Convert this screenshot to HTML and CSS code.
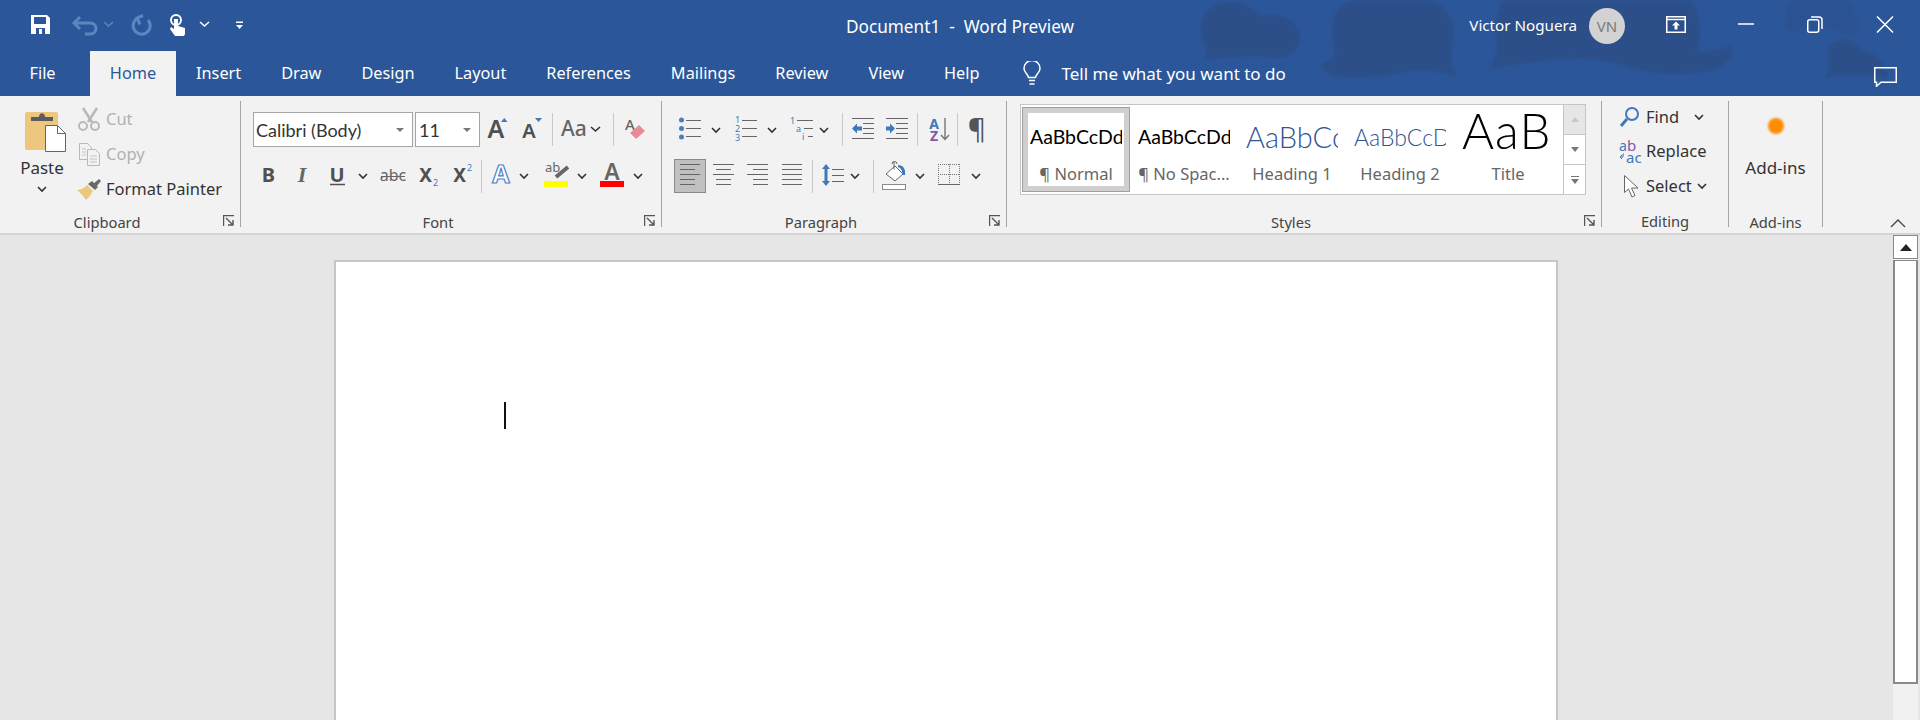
FILE: index.html
```html
<!DOCTYPE html>
<html lang="en">
<head>
    <meta charset="UTF-8">
    <title>Document1 - Word Preview</title>
    <link rel="stylesheet" href="styles.css">
</head>
<body>
    <svg class="defs" width="0" height="0">
        <symbol id="chev" viewBox="0 0 16 12"><path d="M4 4l4 4 4-4" fill="none" stroke="#333" stroke-width="1.6"/></symbol>
        <symbol id="launcher" viewBox="0 0 12 12"><path d="M.5 11V.5H11M3 3l7 7M10 5v5H5" fill="none" stroke="#555" stroke-width="1.4"/></symbol>
    </svg>

    <div class="top-band">
        <svg class="clouds" width="1920" height="96" viewBox="0 0 1920 96">
            <path d="M1201 60c8-5 7-10 3-18-10-20 2-40 28-40 14 0 24 12 32 14 14-4 36 4 36 20 0 20-22 26-38 20-18 0-42 2-61 4z"/>
            <path d="M1322 62c8 0 14-2 12-12-4-20-4-50 24-50h68c22 4 32 24 26 48-2 12 0 22 6 30-16-6-34-10-52-6-26 6-58 8-72 4-8-2-14-8-12-14z"/>
            <path d="M1487 70c8-10 12-20 10-30-4-16 2-40 10-40h184c8 10 12 30 6 50 8 4 26-2 35-4 2 14-10 24-28 26-30 4-50 2-72-4-26-8-52-12-78-8-26 4-48 4-67 10z"/>
            <path d="M1824 78c4-6 6-14 4-22-2-10 6-16 16-16 12 0 16 10 24 12 10 4 18 14 20 26-18-4-46-4-64 0z"/>
            <path class="cloud-light" d="M1786 30c-4-14 2-30 10-30h50c10 10 16 22 12 36-10 4-20-6-32-8-12 0-28 6-40 2z"/>
        </svg>

        <header class="titlebar">
            <div class="qat">
                <svg width="36" height="51" viewBox="0 0 36 51">
                    <path d="M7 15h16l3 3v16H7z" fill="#fff"/>
                    <path d="M10 17h12v7H10z" fill="#2b579a"/>
                    <path d="M12 28h9v6h-9z" fill="#2b579a"/>
                    <path d="M15 29h3v5h-3z" fill="#fff"/>
                </svg>
                <svg width="40" height="51" viewBox="0 0 40 51">
                    <path d="M20 17l-6 6 6 6M15 23h15c8 0 8 11 0 11h-5" fill="none" stroke="#5a87bf" stroke-width="3"/>
                </svg>
                <svg width="18" height="51" viewBox="0 0 18 51"><path d="M4 22l4.500 4 4.500-4" fill="none" stroke="#5a87bf" stroke-width="1.500"/></svg>
                <svg width="42" height="51" viewBox="0 0 42 51">
                    <path d="M30 20a8.500 8.500 0 1 1-10-2" fill="none" stroke="#5a87bf" stroke-width="3"/>
                    <path d="M25 15.500l-6 2.500 3 6.500" fill="none" stroke="#5a87bf" stroke-width="3"/>
                </svg>
                <svg width="32" height="51" viewBox="0 0 32 51">
                    <circle cx="16" cy="20" r="5" fill="none" stroke="#fff" stroke-width="2"/>
                    <path d="M14 19h4v7l7 2v6l-1 2H15l-5-7 1-2 3 2z" fill="#fff"/>
                </svg>
                <svg width="26" height="51" viewBox="0 0 26 51"><path d="M8 22l4.500 4 4.500-4" fill="none" stroke="#fff" stroke-width="1.500"/></svg>
                <svg width="38" height="51" viewBox="0 0 38 51"><path d="M18 21.500h7v1.500h-7zM18 25h7l-3.500 4z" fill="#fff"/></svg>
            </div>
            <div class="doc-title">Document1 &nbsp;-&nbsp; Word Preview</div>
            <div class="account">
                <span class="user-name">Victor Noguera</span>
                <span class="avatar">VN</span>
                <button class="win-btn">
                    <svg width="20" height="17" viewBox="0 0 20 17"><path d="M.75.75h18.500v15.500H.75zM1 3.500h18" fill="none" stroke="#fff" stroke-width="1.500"/><path d="M10 5.500l-4 4h2.500v4h3v-4H14z" fill="#fff"/></svg>
                </button>
                <button class="win-btn">
                    <svg width="16" height="2" viewBox="0 0 16 2"><path d="M0 1h16" stroke="#fff" stroke-width="1.500"/></svg>
                </button>
                <button class="win-btn">
                    <svg width="16" height="17" viewBox="0 0 16 17"><rect x=".75" y="3.750" width="11" height="12.500" rx="2" fill="none" stroke="#fff" stroke-width="1.500"/><path d="M4 1h8a3 3 0 0 1 3 3v9" fill="none" stroke="#fff" stroke-width="1.500"/></svg>
                </button>
                <button class="win-btn">
                    <svg width="18" height="17" viewBox="0 0 18 17"><path d="M1 .5l16 16M17 .5l-16 16" stroke="#fff" stroke-width="1.500"/></svg>
                </button>
            </div>
        </header>

        <nav class="tabs">
            <a class="tab tab-file">File</a>
            <a class="tab active">Home</a>
            <a class="tab">Insert</a>
            <a class="tab">Draw</a>
            <a class="tab">Design</a>
            <a class="tab">Layout</a>
            <a class="tab">References</a>
            <a class="tab">Mailings</a>
            <a class="tab">Review</a>
            <a class="tab">View</a>
            <a class="tab">Help</a>
            <div class="tell-me">
                <svg width="18" height="25" viewBox="0 0 18 25"><path d="M5.500 16.500c0-3-4.500-5-4.500-9a8 8 0 0 1 16 0c0 4-4.500 6-4.500 9zM6 19.500h6M6.500 23h5" fill="none" stroke="#fff" stroke-width="1.500"/></svg>
                <span>Tell me what you want to do</span>
            </div>
            <svg class="comment-icon" width="23" height="20" viewBox="0 0 23 20"><path d="M.75.75h21.500v14.500H7l-4.500 4v-4H.75z" fill="none" stroke="#fff" stroke-width="1.500"/></svg>
        </nav>
    </div>

    <section class="ribbon">
        <div class="group group-clipboard">
            <div class="group-body clip-body">
                <div class="paste">
                    <svg width="68" height="50" viewBox="0 0 68 50">
                        <rect x="17" y="7" width="33" height="38" rx="2" fill="#edc77d"/>
                        <path d="M23 12h8c0-5 6-5 6 0h8v4H23z" fill="#5c5c5c"/>
                        <path d="M37.500 20.500h12l8 8v18h-20z" fill="#fff" stroke="#666"/>
                        <path d="M49.500 20.500v8h8" fill="none" stroke="#666"/>
                    </svg>
                    <span class="paste-label">Paste</span>
                    <svg class="chev" width="16" height="12"><use href="#chev"/></svg>
                </div>
                <div class="clip-list">
                    <div class="clip-row disabled">
                        <svg width="28" height="24" viewBox="0 0 28 24">
                            <path d="M7 1l9 14M21 1l-9 14" stroke="#b8b8b8" stroke-width="2.500"/>
                            <circle cx="7" cy="19" r="4" fill="none" stroke="#b8b8b8" stroke-width="2"/>
                            <circle cx="19" cy="19" r="4" fill="none" stroke="#b8b8b8" stroke-width="2"/>
                        </svg>
                        <span>Cut</span>
                    </div>
                    <div class="clip-row disabled">
                        <svg width="28" height="24" viewBox="0 0 28 24">
                            <path d="M3.500 1.500h8l4 4v12h-12z" fill="none" stroke="#b8b8b8"/>
                            <path d="M11.500 7.500h8l4 4v12h-12z" fill="#f2f2f2" stroke="#b8b8b8"/>
                            <path d="M6 7h4M6 10h4M6 13h4M14 14h7M14 17h7M14 20h7" stroke="#c4c4c4"/>
                        </svg>
                        <span>Copy</span>
                    </div>
                    <div class="clip-row">
                        <svg width="28" height="24" viewBox="0 0 28 24">
                            <path d="M1 13c5 0 8-3 10-5l6 6c-2 3-4 7-7 9-2-3-5-7-9-10z" fill="#edc77d"/>
                            <path d="M12 7l4-3 6 6-3 3z" fill="#6a6a6a"/>
                            <path d="M17 7l6-5 2 2-5 6z" fill="#6a6a6a"/>
                        </svg>
                        <span>Format Painter</span>
                    </div>
                </div>
            </div>
            <div class="group-label">Clipboard</div>
            <svg class="launcher" width="12" height="12"><use href="#launcher"/></svg>
        </div>

        <div class="group group-font">
            <div class="group-body">
                <div class="tool-row font-row">
                    <div class="combo combo-font"><span>Calibri (Body)</span><i class="combo-arrow"></i></div>
                    <div class="combo combo-size"><span>11</span><i class="combo-arrow"></i></div>
                    <svg width="34" height="35" viewBox="0 0 34 35"><text x="16" y="26" class="ico-text" font-size="25" font-weight="600" fill="#505050">A</text><path d="M21 10h6.500l-3.250-4z" fill="#3f79b9"/></svg>
                    <svg width="34" height="35" viewBox="0 0 34 35"><text x="15" y="26" class="ico-text" font-size="20" font-weight="600" fill="#505050">A</text><path d="M21 6h7l-3.500 4z" fill="#3f79b9"/></svg>
                    <i class="sep sep-a"></i>
                    <svg width="60" height="35" viewBox="0 0 60 35"><text x="8" y="24" font-family="Noto Sans" font-size="21" font-weight="500" fill="#666">Aa</text><path d="M38 15l4.500 4 4.500-4" fill="none" stroke="#333" stroke-width="1.600"/></svg>
                    <i class="sep"></i>
                    <svg width="36" height="35" viewBox="0 0 36 35"><text x="16" y="18" class="ico-text" font-size="15" font-weight="500" fill="#666">A</text><path d="M16 21l9-8 6 6-9 8z" fill="#e98a97"/><path d="M16 21l4 5 2 1-3 0z" fill="#fff"/></svg>
                </div>
                <div class="tool-row font-row second">
                    <svg width="32" height="34" viewBox="0 0 32 34"><text x="15.500" y="23" class="ico-text" font-size="20" font-weight="700" fill="#505050">B</text></svg>
                    <svg width="34" height="34" viewBox="0 0 34 34"><text x="17" y="23" class="ico-text ico-serif" font-size="22" font-weight="700" font-style="italic" fill="#666">I</text></svg>
                    <svg width="36" height="34" viewBox="0 0 36 34"><text x="18" y="23" class="ico-text" font-size="20" font-weight="700" fill="#505050">U</text><path d="M11 25.500h15" stroke="#505050" stroke-width="1.500"/></svg>
                    <svg class="chev" width="16" height="12"><use href="#chev"/></svg>
                    <svg width="41" height="34" viewBox="0 0 41 34"><text x="22" y="22" class="ico-text" font-size="16" fill="#666">abc</text><path d="M10 17.500h24" stroke="#666"/></svg>
                    <svg width="34" height="34" viewBox="0 0 34 34"><text x="13.500" y="23" class="ico-text" font-size="19" font-weight="700" fill="#505050">X</text><text x="23.500" y="27" class="ico-text" font-size="9" fill="#3f79b9">2</text></svg>
                    <svg width="34" height="34" viewBox="0 0 34 34"><text x="13.500" y="23" class="ico-text" font-size="19" font-weight="700" fill="#505050">X</text><text x="23.500" y="12" class="ico-text" font-size="9" fill="#3f79b9">2</text></svg>
                    <i class="sep sep-b"></i>
                    <svg width="34" height="34" viewBox="0 0 34 34"><text x="19" y="24" class="ico-text" font-size="25" font-weight="700" fill="#fff" stroke="#4a84c8" stroke-width="1.200">A</text></svg>
                    <svg class="chev" width="16" height="12"><use href="#chev"/></svg>
                    <svg width="42" height="34" viewBox="0 0 42 34"><text x="13" y="13" font-family="Noto Sans" font-size="13" fill="#666">ab</text><path d="M24 18l12-10" stroke="#666" stroke-width="4"/><path d="M12 22h24v6H12z" fill="#ff0"/></svg>
                    <svg class="chev" width="16" height="12"><use href="#chev"/></svg>
                    <svg width="40" height="34" viewBox="0 0 40 34"><text x="22" y="21" class="ico-text" font-size="23" font-weight="600" fill="#666">A</text><path d="M10 22h24v6H10z" fill="#f00"/></svg>
                    <svg class="chev" width="16" height="12"><use href="#chev"/></svg>
                </div>
            </div>
            <div class="group-label">Font</div>
            <svg class="launcher" width="12" height="12"><use href="#launcher"/></svg>
        </div>

        <div class="group group-paragraph">
            <div class="group-body">
                <div class="tool-row para-row">
                    <svg width="38" height="35" viewBox="0 0 38 35"><g fill="#4a7ebb"><circle cx="11.500" cy="8" r="2.500"/><circle cx="11.500" cy="16.500" r="2.500"/><circle cx="11.500" cy="25" r="2.500"/></g><path class="ln" d="M16 8.500h15M16 16.500h15M16 24.500h15"/></svg>
                    <svg class="chev" width="16" height="12"><use href="#chev"/></svg>
                    <svg width="40" height="35" viewBox="0 0 40 35"><g class="num" fill="#3f79b9" font-size="9" font-family="Noto Sans"><text x="11" y="11">1</text><text x="11" y="20">2</text><text x="11" y="29">3</text></g><path class="ln" d="M18 8.500h15M18 16.500h15M18 24.500h15"/></svg>
                    <svg class="chev" width="16" height="12"><use href="#chev"/></svg>
                    <svg width="36" height="35" viewBox="0 0 36 35"><g fill="#3f79b9" font-size="9" font-family="Noto Sans"><text x="10" y="12">1</text><text x="16" y="20">a</text><text x="22" y="28">i</text></g><path class="ln" d="M17 8.500h16M24 16.500h9M28 24.500h5"/></svg>
                    <svg class="chev" width="16" height="12"><use href="#chev"/></svg>
                    <i class="sep sep-c"></i>
                    <svg width="37" height="35" viewBox="0 0 37 35"><path class="ln" d="M9 6.500h22M20 11.500h11M20 16.500h11M20 21.500h11M9 26.500h22"/><path d="M9 16.500l5-5v3h5v4h-5v3z" fill="#3f79b9"/></svg>
                    <svg width="36" height="35" viewBox="0 0 36 35"><path class="ln" d="M6 6.500h22M16 11.500h12M16 16.500h12M16 21.500h12M6 26.500h22"/><path d="M15 16.500l-5-5v3H6v4h4v3z" fill="#3f79b9"/></svg>
                    <i class="sep sep-d"></i>
                    <svg width="39" height="35" viewBox="0 0 39 35"><text x="16" y="17" class="ico-text" font-size="14" font-weight="700" fill="#3f79b9">A</text><text x="16" y="29" class="ico-text" font-size="14" font-weight="700" fill="#8655a8">Z</text><path d="M27 6v21M23 23l4 4.500 4-4.500" fill="none" stroke="#777" stroke-width="1.400"/></svg>
                    <i class="sep"></i>
                    <svg width="36" height="35" viewBox="0 0 36 35"><text x="19" y="27" class="ico-text" font-size="28" fill="#555">¶</text></svg>
                </div>
                <div class="tool-row para-row second">
                    <svg class="align-active" width="32" height="34" viewBox="0 0 32 34"><path class="ln" d="M6 5.500h20M6 10.500h15M6 15.500h20M6 20.500h15M6 25.500h15"/></svg>
                    <svg width="34" height="34" viewBox="0 0 34 34"><path class="ln" d="M7 5.500h21M10 10.500h15M7 15.500h21M10 20.500h15M10 25.500h15"/></svg>
                    <svg width="35" height="34" viewBox="0 0 35 34"><path class="ln" d="M7 5.500h21M13 10.500h15M7 15.500h21M13 20.500h15M13 25.500h15"/></svg>
                    <svg width="34" height="34" viewBox="0 0 34 34"><path class="ln" d="M7 5.500h20M7 10.500h20M7 15.500h20M7 20.500h20M7 25.500h20"/></svg>
                    <i class="sep sep-e"></i>
                    <svg width="34" height="34" viewBox="0 0 34 34"><path d="M13 5l4 5h-2.500v12H17l-4 5-4-5h2.500V10H9z" fill="#3f79b9"/><path class="ln" d="M19 10.500h12M19 16.500h12M19 22.500h12"/></svg>
                    <svg class="chev" width="16" height="12"><use href="#chev"/></svg>
                    <i class="sep sep-c"></i>
                    <svg width="38" height="34" viewBox="0 0 38 34"><path d="M21 7l8 8-8 7-9-7z" fill="#fff" stroke="#666"/><path d="M20 2.500v8" stroke="#666"/><path d="M18 5a2.500 2.500 0 0 1 5 0" fill="none" stroke="#666"/><path d="M24 6c5 0 8 4 7 10h-3c1-4-1-7-4-8z" fill="#3f79b9"/><rect x="8.500" y="25.500" width="23" height="5" fill="#fff" stroke="#8a8a8a"/></svg>
                    <svg class="chev" width="16" height="12"><use href="#chev"/></svg>
                    <svg width="40" height="34" viewBox="0 0 40 34"><path class="dotted" d="M10.500 5v20M21.500 5v20M31.500 5v20M10 5.500h22M10 15.500h22"/><path class="ln" d="M10 25.500h22"/></svg>
                    <svg class="chev" width="16" height="12"><use href="#chev"/></svg>
                </div>
            </div>
            <div class="group-label">Paragraph</div>
            <svg class="launcher" width="12" height="12"><use href="#launcher"/></svg>
        </div>

        <div class="group group-styles">
            <div class="group-body styles-body">
                <div class="gallery">
                    <div class="style-item selected"><div class="preview pv-normal">AaBbCcDd</div><div class="style-label">¶ Normal</div></div>
                    <div class="style-item"><div class="preview pv-normal">AaBbCcDd</div><div class="style-label">¶ No Spac...</div></div>
                    <div class="style-item"><div class="preview pv-h1">AaBbCcDd</div><div class="style-label">Heading 1</div></div>
                    <div class="style-item"><div class="preview pv-h2">AaBbCcDd</div><div class="style-label">Heading 2</div></div>
                    <div class="style-item"><div class="preview pv-title">AaB</div><div class="style-label">Title</div></div>
                    <div class="gallery-scroll">
                        <div class="scroll-btn scroll-up"><svg width="8" height="5" viewBox="0 0 8 5"><path d="M0 5l4-5 4 5z" fill="#c8c8c8"/></svg></div>
                        <div class="scroll-btn"><svg width="8" height="5" viewBox="0 0 8 5"><path d="M0 0l4 5 4-5z" fill="#777"/></svg></div>
                        <div class="scroll-btn"><svg width="8" height="8" viewBox="0 0 8 8"><path d="M0 .5h8" stroke="#777"/><path d="M0 3l4 5 4-5z" fill="#777"/></svg></div>
                    </div>
                </div>
            </div>
            <div class="group-label">Styles</div>
            <svg class="launcher" width="12" height="12"><use href="#launcher"/></svg>
        </div>

        <div class="group group-editing">
            <div class="group-body edit-list">
                <div class="edit-row">
                    <svg width="44" height="24" viewBox="0 0 44 24"><circle cx="30" cy="9" r="6" fill="none" stroke="#3f79b9" stroke-width="2"/><path d="M25 14l-6 7" stroke="#3f79b9" stroke-width="3"/></svg>
                    <span>Find</span>
                    <svg class="chev chev-find" width="16" height="12"><use href="#chev"/></svg>
                </div>
                <div class="edit-row">
                    <svg width="44" height="26" viewBox="0 0 44 26"><text x="17" y="12" font-family="Noto Sans" font-size="14" fill="#3f79b9">a</text><text x="25" y="12" font-family="Noto Sans" font-size="15" fill="#8655a8">b</text><text x="24" y="24" font-family="Noto Sans" font-size="15" fill="#3f79b9">ac</text><path d="M22 15h-1v3h-3M18 18l2-2M18 18l2 2" fill="none" stroke="#3f79b9"/></svg>
                    <span>Replace</span>
                </div>
                <div class="edit-row">
                    <svg width="44" height="24" viewBox="0 0 44 24"><path d="M22.500 1.500v17l4-3.500 3.500 8 3-1.500-3.500-7.500H36z" fill="#fff" stroke="#666"/></svg>
                    <span>Select</span>
                    <svg class="chev chev-select" width="16" height="12"><use href="#chev"/></svg>
                </div>
            </div>
            <div class="group-label">Editing</div>
        </div>

        <div class="group group-addins">
            <div class="group-body addins-body">
                <i class="addin-dot"></i>
                <span>Add-ins</span>
            </div>
            <div class="group-label">Add-ins</div>
        </div>

        <svg class="collapse" width="16" height="9" viewBox="0 0 16 9"><path d="M1 8l7-7 7 7" fill="none" stroke="#444" stroke-width="1.300"/></svg>
    </section>

    <main class="workspace">
        <div class="doc-area">
            <div class="page"><i class="caret"></i></div>
        </div>
        <div class="scrollbar">
            <div class="sb-up"><svg width="12" height="7" viewBox="0 0 12 7"><path d="M0 7l6-7 6 7z" fill="#222"/></svg></div>
            <div class="sb-thumb"></div>
        </div>
    </main>
</body>
</html>
```

FILE: styles.css
```css
:root {
    --word-blue: #2b579a;
    --ribbon-bg: #f2f2f2;
    --canvas-bg: #e6e6e6;
    --divider: #a6a6a6;
    --ui-font: "Noto Sans", "Open Sans", sans-serif;
    --doc-font: Lato, "Liberation Sans", sans-serif;
}

* {
    margin: 0;
    padding: 0;
    box-sizing: border-box;
}

html, body {
    height: 720px;
    overflow: hidden;
}

body {
    display: flex;
    flex-direction: column;
    font-family: var(--ui-font);
    font-size: 16.500px;
    color: #444;
    background-color: var(--canvas-bg);
}

svg {
    display: block;
    flex: none;
}

.defs {
    position: absolute;
}

.ln {
    fill: none;
    stroke: #666;
    stroke-width: 1;
}

.dotted {
    fill: none;
    stroke: #777;
    stroke-dasharray: 1 1;
    shape-rendering: crispEdges;
}

.ico-text {
    font-family: "Noto Sans", sans-serif;
    text-anchor: middle;
}

.ico-serif {
    font-family: "Liberation Serif", serif;
}

/* title bar and tabs */
.top-band {
    position: relative;
    background-color: var(--word-blue);
    color: #fff;
}

.clouds {
    position: absolute;
    top: 0;
    left: 0;
    fill: #2c4f89;
    filter: blur(1.500px);
}

.cloud-light {
    fill: #2b5392;
}

.titlebar {
    position: relative;
    height: 51px;
    display: grid;
    grid-template-columns: 1fr auto 1fr;
    align-items: center;
}

.qat {
    display: flex;
    padding-left: 24px;
}

.doc-title {
    font-size: 17.200px;
    padding-top: 2px;
}

.account {
    display: flex;
    align-items: center;
    justify-content: flex-end;
}

.user-name {
    font-size: 15.200px;
    margin-right: 12px;
    padding-bottom: 2px;
}

.avatar {
    width: 36px;
    height: 36px;
    border-radius: 50%;
    background-color: #d2d2d2;
    color: #7a7a7a;
    font-size: 15px;
    display: flex;
    align-items: center;
    justify-content: center;
    margin-right: 16px;
}

.win-btn {
    width: 69.750px;
    height: 51px;
    border: none;
    background: none;
    display: flex;
    align-items: center;
    justify-content: center;
    padding-bottom: 3px;
}

.tabs {
    position: relative;
    height: 45px;
    display: flex;
    align-items: stretch;
    padding-left: 10px;
}

.tab {
    padding: 0 20px;
    font-size: 16.300px;
    line-height: 44px;
}

.tab-file {
    width: 80px;
    padding: 0 19.500px;
}

.tab.active {
    width: 86px;
    padding: 0;
    text-align: center;
    background-color: var(--ribbon-bg);
    color: #2b579a;
}

.tell-me {
    display: flex;
    align-items: center;
    gap: 20px;
    margin-left: 24px;
    font-size: 17px;
}

.comment-icon {
    margin: 16px 23px 0 auto;
}

/* ribbon */
.ribbon {
    height: 139px;
    display: flex;
    flex: none;
    background-color: var(--ribbon-bg);
    border-bottom: 2px solid #d4d4d4;
}

.group {
    position: relative;
    height: 126px;
    margin-top: 5px;
    display: flex;
    flex-direction: column;
    flex: none;
    border-right: 1px solid var(--divider);
}

.group-body {
    flex: none;
    height: 110px;
    padding-top: 11px;
}

.group-label {
    height: 16px;
    line-height: 22px;
    text-align: center;
    font-size: 14.700px;
}

.launcher {
    position: absolute;
    right: 5px;
    bottom: 0;
}

.group-clipboard .group-label,
.group-font .group-label,
.group-paragraph .group-label,
.group-styles .group-label {
    padding-right: 26px;
}

.group-clipboard { width: 241px; }
.group-font { width: 421px; }
.group-paragraph { width: 345px; }
.group-styles { width: 595px; }
.group-editing { width: 127px; }
.group-addins { width: 94px; }

.clip-body {
    display: flex;
    padding-top: 0;
}

.paste {
    width: 68px;
    margin-left: 8px;
    padding-top: 4px;
    display: flex;
    flex-direction: column;
    align-items: center;
}

.paste-label {
    line-height: 20px;
    margin-top: 3px;
    font-size: 17px;
    color: #333;
}

.paste .chev {
    margin-top: 5px;
}

.clip-row {
    height: 35px;
    display: flex;
    align-items: center;
    color: #333;
}

.clip-row span {
    margin-left: 2px;
}

.clip-row.disabled {
    color: #b1b1b1;
}

.tool-row {
    display: flex;
    align-items: center;
    height: 35px;
}

.tool-row.second {
    height: 34px;
    margin-top: 12px;
}

.font-row {
    padding-left: 12px;
}

.para-row {
    padding-left: 8px;
}

.para-row.second {
    padding-left: 12px;
}

.sep {
    width: 1px;
    height: 33px;
    flex: none;
    background-color: #c8c8c8;
}

.sep-a { margin-left: 4px; }
.sep-b { margin-left: 1px; }
.sep-c { margin-left: 10px; }
.sep-d { margin-left: 1px; }
.sep-e { margin-left: 3px; }

.combo {
    height: 35px;
    display: flex;
    align-items: center;
    justify-content: space-between;
    flex: none;
    background-color: #fff;
    border: 1px solid #a6a6a6;
    font-family: var(--doc-font);
    font-size: 18px;
    color: #333;
    padding: 0 8px 0 2px;
}

.combo-font {
    width: 160px;
    margin-right: 2px;
}

.combo-size {
    width: 65px;
    padding-left: 3px;
}

.combo-arrow {
    width: 0;
    height: 0;
    border-left: 4px solid transparent;
    border-right: 4px solid transparent;
    border-top: 4px solid #777;
}

.align-active {
    background-color: #c0c0c0;
    outline: 1px solid #8a8a8a;
    outline-offset: -1px;
}

/* styles gallery */
.styles-body {
    padding: 3px 0 0 13px;
}

.gallery {
    width: 566px;
    height: 91px;
    display: flex;
    padding: 2px 0 0 1px;
    background-color: #fff;
    border: 1px solid #c6c6c6;
}

.style-item {
    width: 108px;
    height: 85px;
    flex: none;
    display: flex;
    flex-direction: column;
    align-items: center;
}

.style-item.selected {
    outline: 1px solid #a0a0a0;
    outline-offset: -1px;
    border: 6px solid #d0cfce;
}

.preview {
    width: 92px;
    height: 57px;
    flex: none;
    line-height: 60px;
    overflow: hidden;
    white-space: nowrap;
    font-family: var(--doc-font);
    color: #000;
}

.selected .preview {
    height: 51px;
    line-height: 48px;
}

.style-label {
    line-height: 20px;
    font-size: 16.500px;
    color: #666;
    white-space: nowrap;
}

.pv-normal { font-size: 19.500px; }

.pv-h1 {
    font-size: 29px;
    font-weight: 300;
    color: #2f5496;
}

.pv-h2 {
    font-size: 23px;
    font-weight: 300;
    color: #2f5496;
}

.pv-title {
    font-size: 49px;
    font-weight: 300;
    line-height: 46px;
    letter-spacing: 1px;
}

.gallery-scroll {
    width: 22px;
    margin: -2px 0 0 auto;
    display: flex;
    flex-direction: column;
    border-left: 1px solid #c6c6c6;
}

.scroll-btn {
    flex: 1;
    display: flex;
    align-items: center;
    justify-content: center;
    border-bottom: 1px solid #c6c6c6;
}

.scroll-btn:last-child {
    border-bottom: none;
}

.scroll-up {
    background-color: #e6e6e6;
}

/* editing and add-ins */
.edit-list {
    padding-top: 0;
    margin-top: -1px;
}

.edit-row {
    height: 34.500px;
    display: flex;
    align-items: center;
    color: #333;
}

.edit-row span {
    padding-bottom: 2px;
}

.chev-find { margin-left: 12px; }
.chev-select { margin-left: 2px; }

.addins-body {
    display: flex;
    flex-direction: column;
    align-items: center;
    color: #333;
    font-size: 17px;
    padding-top: 17px;
}

.addin-dot {
    width: 16px;
    height: 16px;
    border-radius: 50%;
    background-color: #ff8c00;
    filter: blur(1px);
    margin-bottom: 22px;
}

.collapse {
    align-self: flex-end;
    margin: 0 14px 5px auto;
}

/* document area */
.workspace {
    flex: 1;
    min-height: 0;
    display: flex;
}

.doc-area {
    flex: 1;
    overflow: hidden;
    padding: 25px 0 0 334px;
    background-color: var(--canvas-bg);
}

.page {
    width: 1224px;
    height: 500px;
    padding: 140px 0 0 168px;
    background-color: #fff;
    border: 2px solid #c6c6c6;
    border-bottom: none;
}

.caret {
    display: block;
    width: 2px;
    height: 27px;
    background-color: #111;
}

.scrollbar {
    width: 27px;
    flex: none;
    padding-right: 2px;
    background: linear-gradient(to right, #f1f1f1 25px, var(--canvas-bg) 25px);
}

.sb-up {
    height: 24px;
    margin-bottom: 1px;
    display: flex;
    align-items: center;
    justify-content: center;
    background-color: #fff;
    border: 1px solid #8a8a8a;
}

.sb-thumb {
    height: 424px;
    background-color: #fff;
    border: 2px solid #8a8a8a;
    border-top-width: 1px;
}
```
